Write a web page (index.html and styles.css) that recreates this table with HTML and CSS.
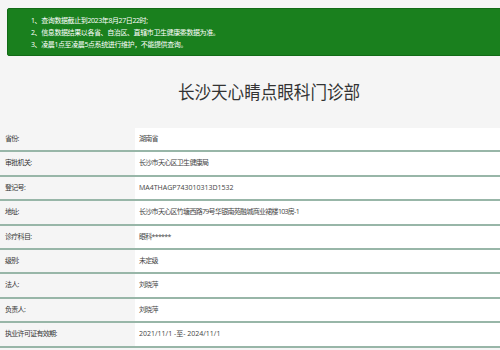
FILE: index.html
```html
<!DOCTYPE html>
<html lang="zh">
<head>
<meta charset="utf-8">
<title>长沙天心睛点眼科门诊部</title>
<link rel="stylesheet" href="styles.css">
</head>
<body>
<div class="notice">
  <div class="line">1、查询数据截止到2023年8月27日22时;</div>
  <div class="line">2、信息数据结果以各省、自治区、直辖市卫生健康委数据为准。</div>
  <div class="line">3、凌晨1点至凌晨5点系统进行维护，不能提供查询。</div>
</div>
<h1 class="title"><span class="title-text">长沙天心睛点眼科门诊部</span></h1>
<div class="table">
  <div class="row"><div class="label">省份:</div><div class="value">湖南省</div></div>
  <div class="row"><div class="label">审批机关:</div><div class="value">长沙市天心区卫生健康局</div></div>
  <div class="row"><div class="label">登记号:</div><div class="value latin">MA4THAGP743010313D1532</div></div>
  <div class="row"><div class="label">地址:</div><div class="value">长沙市天心区竹塘西路79号华银南苑融城商业裙楼103房-1</div></div>
  <div class="row"><div class="label">诊疗科目:</div><div class="value">眼科******</div></div>
  <div class="row"><div class="label">级别:</div><div class="value">未定级</div></div>
  <div class="row"><div class="label">法人:</div><div class="value">刘晓萍</div></div>
  <div class="row"><div class="label">负责人:</div><div class="value">刘晓萍</div></div>
  <div class="row"><div class="label">执业许可证有效期:</div><div class="value latin">2021/11/1 -至- 2024/11/1</div></div>
</div>
</body>
</html>
```
FILE: styles.css
```css
html, body {
  margin: 0;
  padding: 0;
}
body {
  background: #f5f5f5;
  font-family: "Open Sans", "Noto Sans CJK SC", sans-serif;
  color: #333;
  overflow: hidden;
  width: 500px;
}
.notice {
  margin: 8px -6px 0 7px;
  background: #1a801e;
  border: 1px solid #136b17;
  border-radius: 2px;
  padding: 6px 0 6px 23px;
  color: #ffffff;
  font-size: 7px;
  letter-spacing: -0.4px;
  line-height: 12px;
  height: 34px;
}
.title {
  margin: 0;
  height: 72px;
  line-height: 72px;
  text-align: center;
  font-weight: normal;
  font-size: 18px;
  color: #333;
  padding-left: 38px;
}
.title-text {
  display: inline-block;
  transform: scaleX(0.92);
}
.table {
  display: flex;
  flex-direction: column;
}
.row {
  display: grid;
  grid-template-columns: 135px 1fr;
  height: 22.4px;
  border-bottom: 2px solid #98b6a8;
  font-size: 7px;
  line-height: 22.4px;
  letter-spacing: -0.7px;
}
.label {
  background: #f5f5f5;
  padding-left: 5px;
  color: #333;
}
.value {
  background: #ffffff;
  padding-left: 4px;
  color: #444;
  white-space: nowrap;
}
.value.latin {
  letter-spacing: 0;
}
```
